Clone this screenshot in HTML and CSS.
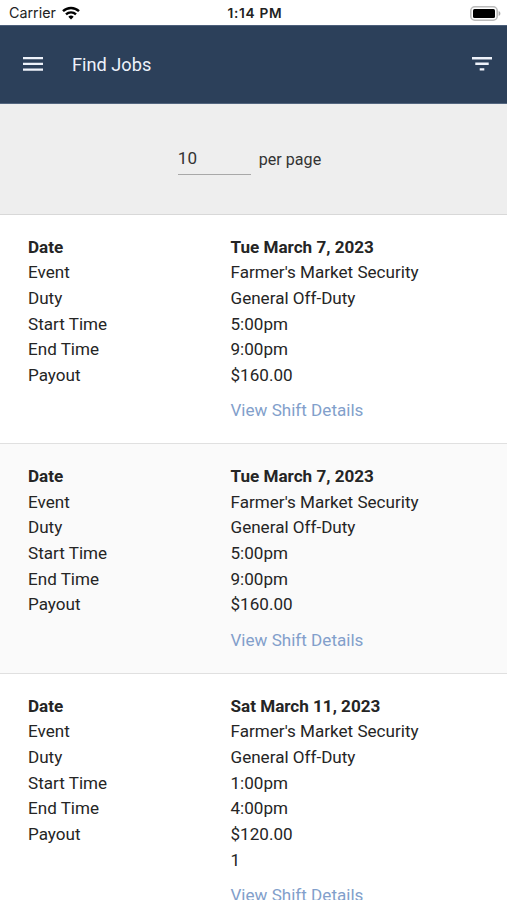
FILE: index.html
```html
<!DOCTYPE html>
<html lang="en">
<head>
<meta charset="utf-8">
<title>Find Jobs</title>
<link rel="stylesheet" href="styles.css">
</head>
<body>
<div class="status">
  <div class="carrier"><span>Carrier</span>
    <svg width="18" height="14" viewBox="0 0 18 14" fill="none" stroke="#000" stroke-width="2.4"><path d="M1 5.2a11.6 11.6 0 0 1 16 0M4 8.4a7.2 7.2 0 0 1 10 0"/><path d="M9 13.5L6.3 10.8a3.9 3.9 0 0 1 5.4 0z" fill="#000" stroke="none"/></svg>
  </div>
  <div class="clock">1:14 PM</div>
  <svg class="battery" width="31" height="15" viewBox="0 0 31 15"><rect x=".8" y=".8" width="26.4" height="13.4" rx="4" fill="none" stroke="#bbb" stroke-width="1.6"/><rect x="3" y="3" width="22" height="9" rx="1.5"/><path d="M28.6 5c2.4 1 2.4 4 0 5z" fill="#aaa"/></svg>
</div>
<header class="bar">
  <svg width="20" height="14" viewBox="0 0 20 14" fill="#eef2fa"><path d="M0 0h20v2.3H0zM0 5.7h20V8H0zM0 11.4h20v2.3H0z"/></svg>
  <h1>Find Jobs</h1>
  <svg class="filter" width="20" height="14" viewBox="0 0 20 14" fill="#eef2fa"><path d="M0 0h20v2.4H0zM3.3 5.6h13.4V8H3.3zM7.7 11.2h4.6v2.3H7.7z"/></svg>
</header>
<div class="pager"><span class="count">10</span><span class="unit">per page</span></div>
<main>
  <section class="job">
    <dl><dt class="strong">Date</dt><dd class="strong">Tue March 7, 2023</dd><dt>Event</dt><dd>Farmer's Market Security</dd><dt>Duty</dt><dd>General Off-Duty</dd><dt>Start Time</dt><dd>5:00pm</dd><dt>End Time</dt><dd>9:00pm</dd><dt>Payout</dt><dd>$160.00</dd></dl>
    <a class="link">View Shift Details</a>
  </section>
  <section class="job alt">
    <dl><dt class="strong">Date</dt><dd class="strong">Tue March 7, 2023</dd><dt>Event</dt><dd>Farmer's Market Security</dd><dt>Duty</dt><dd>General Off-Duty</dd><dt>Start Time</dt><dd>5:00pm</dd><dt>End Time</dt><dd>9:00pm</dd><dt>Payout</dt><dd>$160.00</dd></dl>
    <a class="link">View Shift Details</a>
  </section>
  <section class="job">
    <dl><dt class="strong">Date</dt><dd class="strong">Sat March 11, 2023</dd><dt>Event</dt><dd>Farmer's Market Security</dd><dt>Duty</dt><dd>General Off-Duty</dd><dt>Start Time</dt><dd>1:00pm</dd><dt>End Time</dt><dd>4:00pm</dd><dt>Payout</dt><dd>$120.00</dd><dt></dt><dd>1</dd></dl>
    <a class="link">View Shift Details</a>
  </section>
</main>
</body>
</html>
```
FILE: styles.css
```css
* { box-sizing: border-box; }
body { margin: 0; height: 900px; overflow: hidden; background: #fff; color: #252525; font: 17.08px/25.65px Roboto, sans-serif; }
.status { height: 25px; display: grid; grid-template-columns: 1fr auto 1fr; align-items: center; padding: 1px 6px 0 9px; font: 14.3px/20px Inter, sans-serif; color: #222; }
.carrier { display: flex; align-items: center; gap: 6px; }
.clock { font-weight: 600; font-size: 13.7px; letter-spacing: .7px; }
.battery { justify-self: end; }
.bar { height: 79px; background: #2c405a; border-top: 1px solid #4c5f7a; border-bottom: 1px solid #53667f; color: #eef2fa; display: flex; align-items: center; padding: 0 15px 0 23px; }
.bar svg { margin-bottom: 1px; }
.bar h1 { margin: 0 auto 0 29px; font-size: 18.2px; font-weight: 400; }
.pager { height: 110.8px; background: #eee; border-bottom: 1px solid #d8d8d8; display: flex; justify-content: center; align-items: center; gap: 8px; padding-right: 8px; color: #333; }
.count { width: 73px; height: 32px; border-bottom: 1px solid #a8a8a8; line-height: 30px; }
.unit { font-size: 16.1px; padding-top: 1px; }
.job { height: 229.6px; padding: 19.8px 28px 0; border-bottom: 1px solid #e0e0e0; }
.alt { background: #fafafa; }
dl { margin: 0; display: grid; grid-template-columns: 202.5px 1fr; grid-auto-rows: 25.65px; }
dd { margin: 0; }
.strong { font-weight: 700; }
.link { display: block; margin: 9.8px 0 0 202.5px; color: #829fcb; }
```
